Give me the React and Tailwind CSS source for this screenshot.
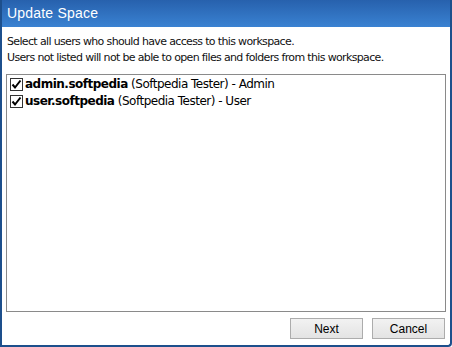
const users = [
  { login: "admin.softpedia", name: "Softpedia Tester", role: "Admin" },
  { login: "user.softpedia", name: "Softpedia Tester", role: "User" },
];

function Check() {
  return (
    <span className="flex items-center justify-center w-[13px] h-[13px] border border-[#333] bg-white shrink-0">
      <svg width="11" height="11" viewBox="0 0 11 11">
        <path d="M1.5 5.5 L4 8.5 L9.5 1.5" fill="none" stroke="#000" strokeWidth="2" />
      </svg>
    </span>
  );
}

export default function App() {
  return (
    <div
      className="w-[452px] h-[347px] bg-white border-2 border-t-0 border-[#1d4f8c] rounded-br-[4px] flex flex-col overflow-hidden"
      style={{ fontFamily: "Tahoma, 'DejaVu Sans', 'Liberation Sans', sans-serif" }}
    >
      <div className="h-[27px] shrink-0 bg-gradient-to-b from-[#2761ad] to-[#3a82d2] flex items-center pl-[5px]">
        <span className="text-white text-[14px] font-['Liberation_Sans',sans-serif] tracking-[0.2px]">Update Space</span>
      </div>
      <div className="flex-1 flex flex-col px-[4px] pt-[7px] pb-[6px]">
        <p className="text-[11px] leading-[16px] text-[#111] pl-[1px] font-['DejaVu_Sans',sans-serif] tracking-[-0.65px]">
          Select all users who should have access to this workspace.
          <br />
          Users not listed will not be able to open files and folders from this workspace.
        </p>
        <div className="mt-[8px] h-[238px] border border-[#8a8a8a] pl-[3px] pt-[3px] flex flex-col gap-[4px]">
          {users.map((u) => (
            <div key={u.login} className="flex items-center gap-[2px] text-[12px] leading-[13px] text-black font-['DejaVu_Sans',sans-serif] tracking-[-0.5px]">
              <Check />
              <span>
                <b>{u.login}</b> ({u.name}) - {u.role}
              </span>
            </div>
          ))}
        </div>
        <div className="mt-auto flex justify-end gap-[9px] pr-[1px]">
          {["Next", "Cancel"].map((b) => (
            <button
              key={b}
              className="w-[73px] h-[21px] border border-[#acacac] bg-gradient-to-b from-[#f2f2f2] to-[#e3e3e3] text-[12px] text-black font-['Liberation_Sans',sans-serif]"
            >
              {b}
            </button>
          ))}
        </div>
      </div>
    </div>
  );
}
